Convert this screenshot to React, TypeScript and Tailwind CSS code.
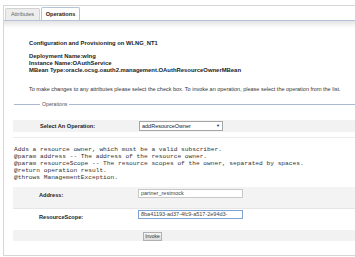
import React from 'react';

const docLines = [
  'Adds a resource owner, which must be a valid subscriber.',
  '@param address -- The address of the resource owner.',
  '@param resourceScope -- The resource scopes of the owner, separated by spaces.',
  '@return operation result.',
  '@throws ManagementException.',
];

export default function App() {
  return (
    <div className="w-[355px] h-[257px] bg-white overflow-hidden font-['Liberation_Sans',Arial,sans-serif] text-[#222]">
      <div className="mt-[5px] ml-[3px] h-[251px] border border-r-0 border-[#d6d6d6] flex flex-col">
        {/* tab strip */}
        <div className="h-[15px] flex items-end gap-[1px] pl-[1px] border-b border-[#b4c2da]">
          <div className="h-[12px] w-[35px] flex items-center justify-center bg-[#ededed] border border-b-0 border-[#d2d2d2] rounded-t-[2px] text-[5.5px] text-[#666]">
            Attributes
          </div>
          <div className="h-[13px] w-[39px] flex items-center justify-center bg-white border border-b-0 border-[#b4c2da] rounded-t-[2px] text-[5.6px] font-bold">
            Operations
          </div>
        </div>
        <div className="h-[7px] bg-linear-to-b from-[#e4e4e4] to-white" />

        {/* header info */}
        <div className="pl-[25px] mt-[12px] text-[5.5px] leading-[7px]">
          <div className="font-bold text-[5.8px]">Configuration and Provisioning on WLNG_NT1</div>
          <div className="font-bold text-[5.9px] mt-[6px]">
            <div>Deployment Name:wlng</div>
            <div>Instance Name:OAuthService</div>
            <div>MBean Type:oracle.ocsg.oauth2.management.OAuthResourceOwnerMBean</div>
          </div>
          <div className="mt-[12px] text-[#333] whitespace-nowrap">
            To make changes to any attributes please select the check box. To invoke an operation, please select the operation from the list.
          </div>
        </div>

        {/* operations fieldset */}
        <div className="ml-[10px] mt-[8px] flex items-center h-[7px] text-[5.2px] text-[#555]">
          <div className="w-[26px] h-px bg-[#a9b9d2]" />
          <span className="px-[2px] leading-[7px]">Operations</span>
          <div className="flex-1 h-px bg-[#a9b9d2]" />
        </div>

        <div className="ml-[9px] mt-[12px] flex flex-col">
          <div className="h-[12px] bg-[#f2f2f2] flex items-center text-[5.6px] font-bold">
            <div className="w-[126px] pl-[27px]">Select An Operation:</div>
            <div className="w-[84px] h-[10px] bg-white border border-[#a6a6a6] flex items-center justify-between px-[2px] font-normal text-[5.5px]">
              <span>addResourceOwner</span>
              <span className="text-[4px]">▼</span>
            </div>
          </div>
          <div className="h-[6px] border-b border-[#ececec]" />

          <div className="pl-[1px] mt-[8px] font-['Liberation_Mono',monospace] text-[6.2px] leading-[7px] text-[#333] whitespace-pre">
            {docLines.map((l) => (
              <div key={l}>{l}</div>
            ))}
          </div>

          <div className="mt-[6px] h-[22px] bg-[#f3f3f3] border-b border-[#e6e6e6] flex items-start pt-[2px] text-[5.5px]">
            <div className="w-[125px] pl-[26px] pt-[2px] font-bold text-[5.6px]">Address:</div>
            <div className="w-[105px] h-[9px] bg-white border border-[#c8c8c8] px-[2px] flex items-center text-[#444]">
              partner_restmock
            </div>
          </div>
          <div className="h-[21px] flex items-start pt-[1px] text-[5.5px]">
            <div className="w-[125px] pl-[26px] pt-[3px] font-bold text-[5.6px]">ResourceScope:</div>
            <div className="w-[105px] h-[9px] bg-white border border-[#7ea2d6] px-[2px] flex items-center text-[#444] overflow-hidden whitespace-nowrap">
              8ba41193-ad37-4fc9-a517-2e94d3-
            </div>
          </div>
          <div className="h-[11px] bg-[#f2f2f2] flex items-end">
            <div className="ml-[130px] w-[19px] h-[9px] bg-linear-to-b from-[#f6f6f6] to-[#dcdcdc] border border-[#b0b0b0] flex items-center justify-center text-[5px] text-[#333]">
              Invoke
            </div>
          </div>
        </div>
      </div>
    </div>
  );
}
